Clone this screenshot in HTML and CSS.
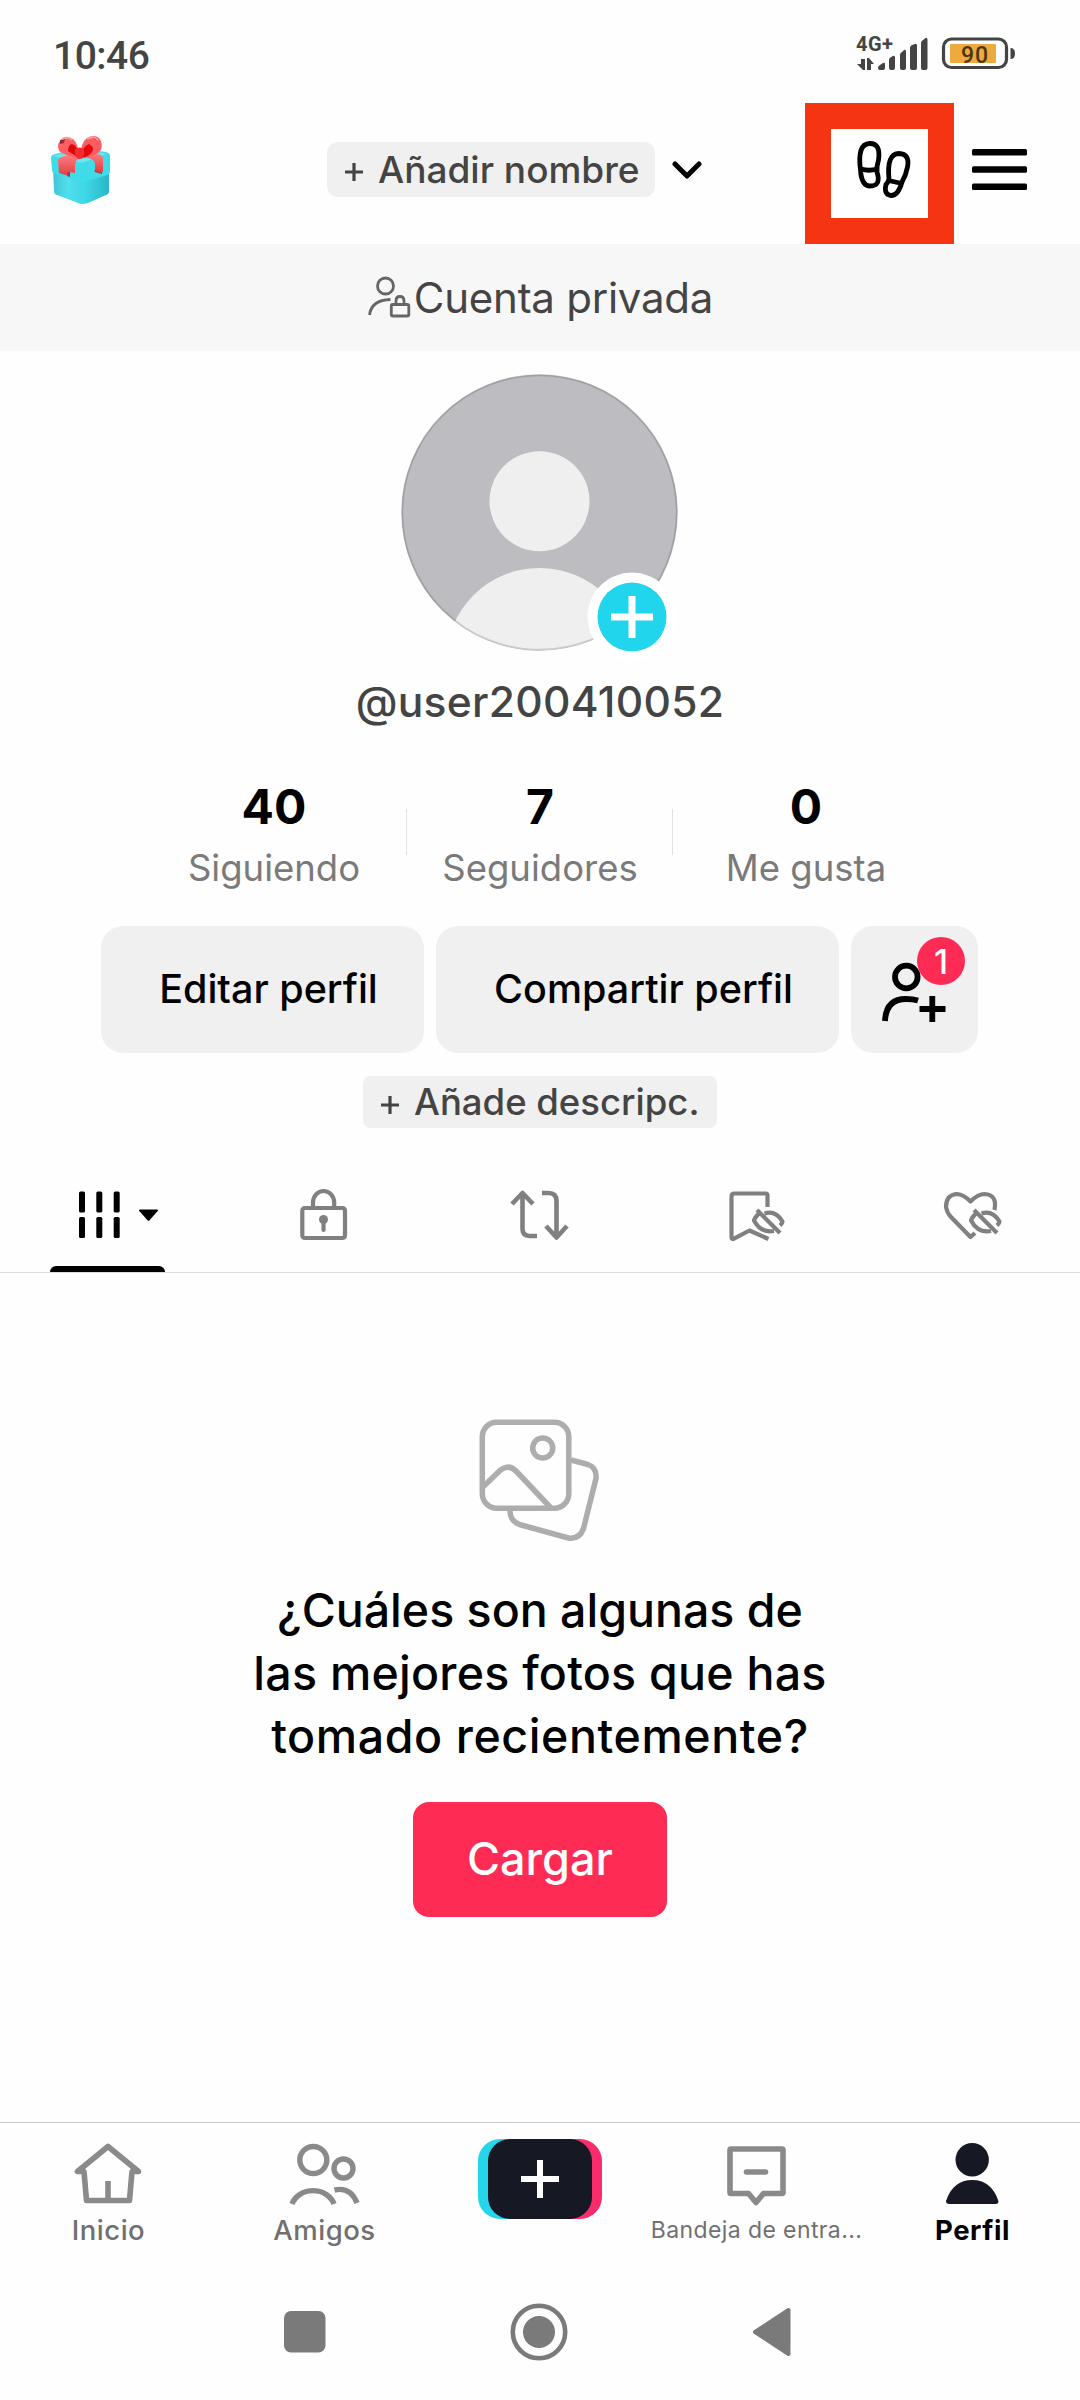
FILE: index.html
```html
<!DOCTYPE html>
<html lang="es">
<head>
<meta charset="utf-8">
<title>Perfil</title>
<link rel="stylesheet" href="styles.css">
</head>
<body>
<div class="screen">
  <div class="status">
    <span class="clock">10:46</span>
    <svg class="status-icons" width="170" height="44" viewBox="850 32 170 44">
      <text class="net" x="856" y="51" textLength="37">4G+</text>
      <g fill="#444">
        <path d="M861 59h4v11h-2l-6-6h4zM867 70V58h2l5 6h-3v6z"/>
        <path d="M878 68q0-2 2-3l3-2q2-1 2 1v4q0 2-2 2h-3q-2 0-2-2zM889 60q0-2 2-3l2-1q2-1 2 2v10q0 2-2 2h-2q-2 0-2-2zM900 55q0-2 2-3l2-2q2-1 2 2v16q0 2-2 2h-2q-2 0-2-2zM910 48q0-2 2-3l3-1q2-1 2 2v22q0 2-2 2h-3q-2 0-2-2zM921 43q0-2 2-3l2.500-2q2-1 2 2v28q0 2-2 2h-2.500q-2 0-2-2z"/>
        <path d="M1010.500 48q4.500 0 4.500 5.500t-4.500 5.500z"/>
      </g>
      <rect x="943.500" y="39" width="63" height="28.500" rx="8" fill="none" stroke="#444" stroke-width="3.200"/>
      <rect x="950" y="44" width="46" height="19" rx="1" fill="#ecab3c"/>
      <text class="batt" x="961" y="62.500" textLength="27">90</text>
    </svg>
  </div>

  <header class="top">
    <svg class="gift" width="62" height="72" viewBox="50 134 62 72">
      <defs>
        <linearGradient id="gl" x1="0" x2="1"><stop offset="0" stop-color="#43c3d2"/><stop offset=".5" stop-color="#4fe0ee"/><stop offset="1" stop-color="#45d6e6"/></linearGradient>
        <linearGradient id="gr" x1="0" x2="1"><stop offset="0" stop-color="#3fdcea"/><stop offset="1" stop-color="#2cb6c6"/></linearGradient>
        <linearGradient id="gb" x1="0" y1="0" x2="0" y2="1"><stop offset="0" stop-color="#ff7a7c"/><stop offset="1" stop-color="#e43c40"/></linearGradient>
      </defs>
      <path d="M53 168 82 178v26q-2 0-4-1l-21-8q-3-1-3-4z" fill="url(#gl)"/>
      <path d="M82 178l27-12v25q0 3-3 4l-18 8q-3 1-6 1z" fill="url(#gr)"/>
      <path d="M51 158q0-3 4-4l23-6 28 4q4 1 4 4v15q0 3-3 4l-20 6q-5 1-9 0l-22-7q-4-1-4-4z" fill="#40dbe8"/>
      <path d="M53 156l27-8 27 6-22 8q-4 1-8 0z" fill="#6be5ee"/>
      <path d="M58 160q3-5 14-4l8 2q-5 2-5 7v8l-6-1v4l-10-3z" fill="url(#gb)"/>
      <path d="M68 172h2v5l-3-1zM94 170l8 2v2l-7-2z" fill="#a93442"/>
      <path d="M85 157l11-3q7 0 7 5v13l-8-1v-8q-1-4-10-6z" fill="url(#gb)"/>
      <path d="M79 158q-14-2-20-7-3-8 3-12 7-3 11 0 6 5 6 19z" fill="#ff6064"/>
      <path d="M79 158q-6-4-11-7 0-6 4-7 6 1 7 14z" fill="#dd080c"/>
      <path d="M81 158q-1-15 6-20 7-4 12 0 4 5 2 12-5 7-20 8z" fill="#fb5c60"/>
      <path d="M81 158q1-12 8-14 6 3 3 8-3 5-11 6z" fill="#e1090d"/>
      <path d="M75 149q5-3 9 0 1 5-1 9-4 2-6 0-3-4-2-9z" fill="#f22b2f"/>
      <path d="M60 140l5-1-1 4-4 1zM91 137l6 0-1 3z" fill="#8e2a3a"/>
      <path d="M62 139q7-3 10 1M87 139q7-4 11 1" stroke="#ff9a9b" stroke-width="2" fill="none"/>
    </svg>
    <div class="chip name-chip"><svg width="18" height="18" viewBox="0 0 18 18"><path d="M0 9h18M9 0v18" stroke="#444" stroke-width="3.200"/></svg><span>Añadir nombre</span></div>
    <svg class="chev" width="30" height="20" viewBox="0 0 30 20"><path d="M3 4 15 16 27 4" fill="none" stroke="#000" stroke-width="5" stroke-linejoin="round" stroke-linecap="round"/></svg>
    <div class="highlight">
      <svg width="60" height="64" viewBox="855 138 60 64" fill="none" stroke="#000" stroke-width="4.800" stroke-linejoin="round">
        <path d="M861.500 170Q858 144 870.500 143.500 882 143 879.500 160 877.500 166 878 172 882.500 186 871 186 862.500 186 861.500 170ZM862 169q8 2.500 16 0"/>
        <path d="M890 179Q887.500 153.500 900 153.500 911 154 908.500 167 907 175 903 182 899 196 892 195.500 884.500 194.500 887 184.500 889.500 182 890 179ZM889.500 180.500 903 183.500"/>
      </svg>
    </div>
    <svg class="menu" width="55" height="41" viewBox="0 0 55 41"><rect width="55" height="6.500" rx="1.500"/><rect y="17.200" width="55" height="6.500" rx="1.500"/><rect y="34.400" width="55" height="6.500" rx="1.500"/></svg>
  </header>

  <div class="private">
    <svg width="44" height="44" viewBox="368 274 44 44" fill="none" stroke="#666" stroke-width="2.800">
      <circle cx="386.500" cy="285" r="8"/><path d="M370.500 314q2-15 21-15.500"/>
      <rect x="392.300" y="303.500" width="17.500" height="11.500" rx="1.500"/><path d="M397 303v-3q0-4.500 4-4.500t4 4.500v3"/>
    </svg>
    <span>Cuenta privada</span>
  </div>

  <div class="avatar">
    <svg width="277" height="277" viewBox="401 373.800 277 277">
      <defs><clipPath id="av"><circle cx="539.500" cy="512.300" r="138"/></clipPath></defs>
      <g clip-path="url(#av)"><rect x="400" y="370" width="280" height="290" fill="#bdbdc1"/><circle cx="539.500" cy="501" r="50" fill="#efefef"/><circle cx="539.500" cy="661" r="93.300" fill="#efefef"/></g>
      <circle cx="539.500" cy="512.300" r="137.300" fill="none" stroke="#000" stroke-opacity=".15" stroke-width="2"/>
    </svg>
    <svg class="avatar-add" width="90" height="90" viewBox="-45 -45 90 90"><circle r="44.500" fill="#fff"/><circle r="34.500" fill="#20d5ec"/><path d="M-21 0h42M0-21v42" stroke="#fff" stroke-width="7"/></svg>
  </div>
  <div class="handle">@user200410052</div>

  <div class="stats">
    <div class="stat"><b>40</b><span>Siguiendo</span></div>
    <div class="stat"><b>7</b><span>Seguidores</span></div>
    <div class="stat"><b>0</b><span>Me gusta</span></div>
  </div>

  <div class="actions">
    <div class="btn edit">Editar perfil</div>
    <div class="btn share">Compartir perfil</div>
    <div class="btn add">
      <svg width="70" height="64" viewBox="882 957 70 64" fill="none" stroke="#000" stroke-width="5.800">
        <circle cx="907.300" cy="975" r="11.300"/><path d="M886 1019q1-22 21-22 7 0 12 1.500"/><path d="M920.500 1007h26M933.300 994v26"/>
      </svg>
      <span class="badge">1</span>
    </div>
  </div>
  <div class="desc"><div class="chip desc-chip"><svg width="18" height="18" viewBox="0 0 18 18"><path d="M0 9h18M9 0v18" stroke="#444" stroke-width="3.200"/></svg><span>Añade descripc.</span></div></div>

  <div class="tabs">
    <div class="tab active"><svg width="84" height="52" viewBox="77 1189 84 52"><g><rect x="79" y="1191.500" width="6" height="21" rx="1.500"/><rect x="96.300" y="1191.500" width="6" height="21" rx="1.500"/><rect x="113.700" y="1191.500" width="6" height="21" rx="1.500"/><rect x="79" y="1217" width="6" height="21" rx="1.500"/><rect x="96.300" y="1217" width="6" height="21" rx="1.500"/><rect x="113.700" y="1217" width="6" height="21" rx="1.500"/></g><path d="M140 1209.500h17q2 0 .5 1.800l-8 9q-1 1-2 0l-8-9q-1.500-1.800.5-1.800z"/></svg></div>
    <div class="tab"><svg width="52" height="54" viewBox="298 1188 52 54" fill="none" stroke="#808080" stroke-width="4.200"><rect x="302.300" y="1208" width="42.700" height="30" rx="2.500"/><path d="M313 1208v-5.500a10.600 11.500 0 0 1 21.200 0v5.500"/><circle cx="323.500" cy="1219.500" r="4.500" fill="#808080" stroke="none"/><path d="M323.500 1219v11" stroke-linecap="round"/></svg></div>
    <div class="tab"><svg width="60" height="52" viewBox="510 1189 60 52" fill="none" stroke="#808080" stroke-width="4.600"><path d="M512 1204l10.500-11 10.500 11M522.500 1193v36q0 6.500 7 7h7.500M542 1193h6.500q8 0 8 8v36M546 1226l10.500 11.500 10.500-11.500" stroke-linejoin="round"/></svg></div>
    <div class="tab"><svg width="58" height="54" viewBox="728 1187 58 54" fill="none" stroke="#808080" stroke-width="4.200" stroke-linejoin="round"><path d="M768.500 1206v-11.500q0-2-2-2h-31q-3 0-3 3v41q0 2 2.500 1.200l15.500-8.200 19 8.500"/><path d="M765.500 1212.500q11-3.500 18 8 0 1.500-2.500 4M759.500 1213q-4 4-4.500 6.500 7 13 20 10.500M758 1209l23 23"/></svg></div>
    <div class="tab"><svg width="60" height="54" viewBox="943 1187 60 54" fill="none" stroke="#808080" stroke-width="4.200" stroke-linejoin="round"><path d="M995.500 1209q3-15.500-10-16-6.500 0-14 7.500-7.500-7.500-14-7.500-10.500 1-10.500 13 1 6 5 10l19.500 20 4.500-4"/><path d="M982.500 1212.500q11-3.500 18 8 0 1.500-2.500 4M976.500 1213q-4 4-4.500 6.500 7 13 20 10.500M975 1209l23 23"/></svg></div>
  </div>

  <main class="empty">
    <svg width="124" height="126" viewBox="478 1417 124 126" fill="none" stroke="#adadad" stroke-width="5.500" stroke-linejoin="round">
      <rect x="482.300" y="1422.300" width="86.500" height="86" rx="14.500"/><circle cx="542.700" cy="1448" r="10"/>
      <path d="M483.500 1486.500l17-16.500q8.500-6.500 16 1.500l34 36"/><path d="M571 1460l17 4.500q9 3 8 14l-12.500 50q-4 11-15 9.500l-49-13.500q-10-4-9.500-14.500"/>
    </svg>
    <p class="question"><span>¿Cuáles son algunas de</span><span class="q2">las mejores fotos que has</span><span class="q3">tomado recientemente?</span></p>
    <div class="upload">Cargar</div>
  </main>

  <nav class="nav">
    <div class="item"><svg width="72" height="66" viewBox="71 2141 72 66" fill="none" stroke="#8a8a8c" stroke-width="5.600" stroke-linejoin="round"><path d="M107 2146.500l-30.500 25h6.500l2.500 29h43l2.500-29h6.500zM107 2181v20"/></svg><span>Inicio</span></div>
    <div class="item"><svg width="74" height="66" viewBox="287 2141 74 66" fill="none" stroke="#8a8a8c" stroke-width="5.400"><circle cx="313.300" cy="2160" r="13.500"/><circle cx="343.500" cy="2168.500" r="9.500"/><path d="M292 2204a22 19 0 0 1 42 0M334.500 2190q16-3.500 22.500 13"/></svg><span>Amigos</span></div>
    <div class="item create"><svg width="124" height="80" viewBox="0 0 124 80"><rect width="90" height="80" rx="22" fill="#25d5e9"/><rect x="34" width="90" height="80" rx="22" fill="#f92d6b"/><rect x="10" width="104" height="80" rx="22" fill="#161823"/><path d="M43 40h38M62 21v38" stroke="#fff" stroke-width="6"/></svg></div>
    <div class="item"><svg width="66" height="66" viewBox="723 2141 66 66" fill="none" stroke="#8a8a8c" stroke-width="5.600" stroke-linejoin="round"><path d="M731 2149h51q1 0 1 1v42.500q0 1-1 1h-18.500l-7.500 9-7.500-9h-17.500q-1 0-1-1v-42.500q0-1 1-1zM746.500 2172h19" stroke-linecap="round"/></svg><span class="inbox">Bandeja de entra...</span></div>
    <div class="item"><svg width="60" height="66" viewBox="942 2141 60 66" fill="#161823"><circle cx="972.200" cy="2159.800" r="16.700"/><path d="M946 2201q7-21 26.200-21t26.200 21q.5 3-3 3h-46q-3.500 0-3.400-3z"/></svg><span class="current">Perfil</span></div>
  </nav>

  <div class="system">
    <svg width="42" height="42"><rect width="41.500" height="41.500" rx="7" fill="#7a7a7a"/></svg>
    <svg width="58" height="58" viewBox="-29 -29 58 58"><circle r="26.200" fill="none" stroke="#7a7a7a" stroke-width="4.600"/><circle r="16" fill="#7a7a7a"/></svg>
    <svg width="40" height="50" viewBox="0 0 40 50"><path d="M3 25 36.500 3v44z" fill="#7a7a7a" stroke="#7a7a7a" stroke-width="4" stroke-linejoin="round"/></svg>
  </div>
</div>
</body>
</html>
```
FILE: styles.css
```css
* { box-sizing: border-box; }
body { margin: 0; background: #fefefe; font-family: Inter, Roboto, "Liberation Sans", sans-serif; color: #000; }
svg { display: block; flex: none; }
span { white-space: nowrap; }
.screen { width: 1080px; height: 2400px; display: flex; flex-direction: column; overflow: hidden; }

.status { height: 103px; padding: 8px 60px 0 53px; display: flex; justify-content: space-between; align-items: center; font-family: Roboto, sans-serif; }
.clock { font-size: 39px; font-weight: 500; color: #444; letter-spacing: -.5px; }
.status-icons { margin-top: -3px; }
.net { font-size: 20px; font-weight: 700; fill: #444; }
.batt { font-size: 23px; font-weight: 500; fill: #4d3510; }

.top { height: 141px; display: flex; align-items: flex-start; padding-left: 50px; }
.gift { margin-top: 31px; }
.chip { display: flex; align-items: center; background: #f0f0f0; color: #444; font-weight: 500; }
.name-chip { width: 328px; height: 55px; margin: 39px 0 0 215px; padding: 0 0 1px 18px; gap: 15px; border-radius: 11px; font-size: 37px; }
.chip svg { margin-top: 5px; }
.chev { margin: 57px 0 0 17px; }
.highlight { width: 149px; height: 141px; margin-left: 103px; border: 26px solid #f53411; padding: 9px 0 0 23px; background: #fff; }
.menu { margin: 46px 0 0 18px; }

.private { height: 107px; background: #f7f7f7; display: flex; align-items: center; justify-content: center; gap: 3px; color: #444; font-size: 42px; letter-spacing: -.25px; }
.private svg { margin-top: -2px; }

.avatar { position: relative; width: 277px; height: 277px; margin: 23px 0 0 401px; }
.avatar-add { position: absolute; left: 185.500px; top: 197.500px; }
.handle { height: 60px; margin-top: 21px; line-height: 60px; text-align: center; font-size: 42.500px; font-weight: 500; color: #444; letter-spacing: .3px; }

.stats { display: flex; margin: 47px 141px 0; height: 119px; }
.stat { width: 266px; display: flex; flex-direction: column; align-items: center; position: relative; }
.stat b { height: 56px; line-height: 56px; font-size: 48px; font-weight: 700; }
.stat span { height: 50px; line-height: 50px; margin-top: 8px; font-size: 36.500px; color: #7a7a7a; }
.stat + .stat::before { content: ""; position: absolute; left: -1px; top: 30px; width: 1px; height: 46px; background: #e2e2e2; }

.actions { display: flex; gap: 12px; margin-left: 101px; height: 127px; margin-top: 28px; }
.btn { background: #f0f0f0; border-radius: 22px; display: flex; align-items: center; justify-content: center; font-size: 39.500px; font-weight: 500; padding-bottom: 1px; }
.edit { width: 323px; padding-left: 12px; }
.share { width: 403px; padding-left: 12px; }
.add { width: 127px; position: relative; padding: 2px 0 0 3px; }
.badge { position: absolute; left: 66px; top: 11px; width: 48px; height: 48px; border-radius: 50%; background: #fe2c55; color: #fff; font-size: 34px; line-height: 49px; text-align: center; }

.desc { display: flex; justify-content: center; padding-top: 23px; }
.desc-chip { width: 354px; height: 52px; border-radius: 8px; padding: 0 0 0 18px; gap: 15px; font-size: 36.500px; }

.tabs { height: 145px; display: flex; border-bottom: 1px solid #dcdcdc; }
.tab { width: 216px; height: 144px; padding-top: 29px; display: flex; align-items: center; justify-content: center; position: relative; }
.active { padding-left: 22px; }
.active::after { content: ""; position: absolute; left: 50px; bottom: 0; width: 115px; height: 6px; border-radius: 6px 6px 0 0; background: #000; }

.empty { height: 849px; display: flex; flex-direction: column; align-items: center; padding-top: 144px; }
.question { margin: 36px 0 0; display: flex; flex-direction: column; align-items: center; font-size: 46.500px; font-weight: 500; line-height: 63px; }
.q2 { letter-spacing: .25px; }
.q3 { letter-spacing: .6px; }
.upload { width: 254px; height: 115px; margin-top: 34px; border-radius: 16px; background: #fe2c55; color: #fff; display: flex; align-items: center; justify-content: center; font-size: 45px; font-weight: 500; padding-bottom: 2px; }

.nav { height: 160px; border-top: 1px solid #ccc; display: flex; }
.item { width: 216px; padding-top: 18px; display: flex; flex-direction: column; align-items: center; font-size: 27.500px; font-weight: 500; color: #707070; letter-spacing: .5px; }
.item span { height: 40px; line-height: 40px; margin: 3px 0 0 1px; }
.item .inbox { font-size: 23px; font-weight: 400; letter-spacing: .4px; }
.create { padding-top: 16px; }
.item .current { font-weight: 700; color: #000; }

.system { height: 100px; display: flex; align-items: center; padding-left: 284px; gap: 184px; }
```
